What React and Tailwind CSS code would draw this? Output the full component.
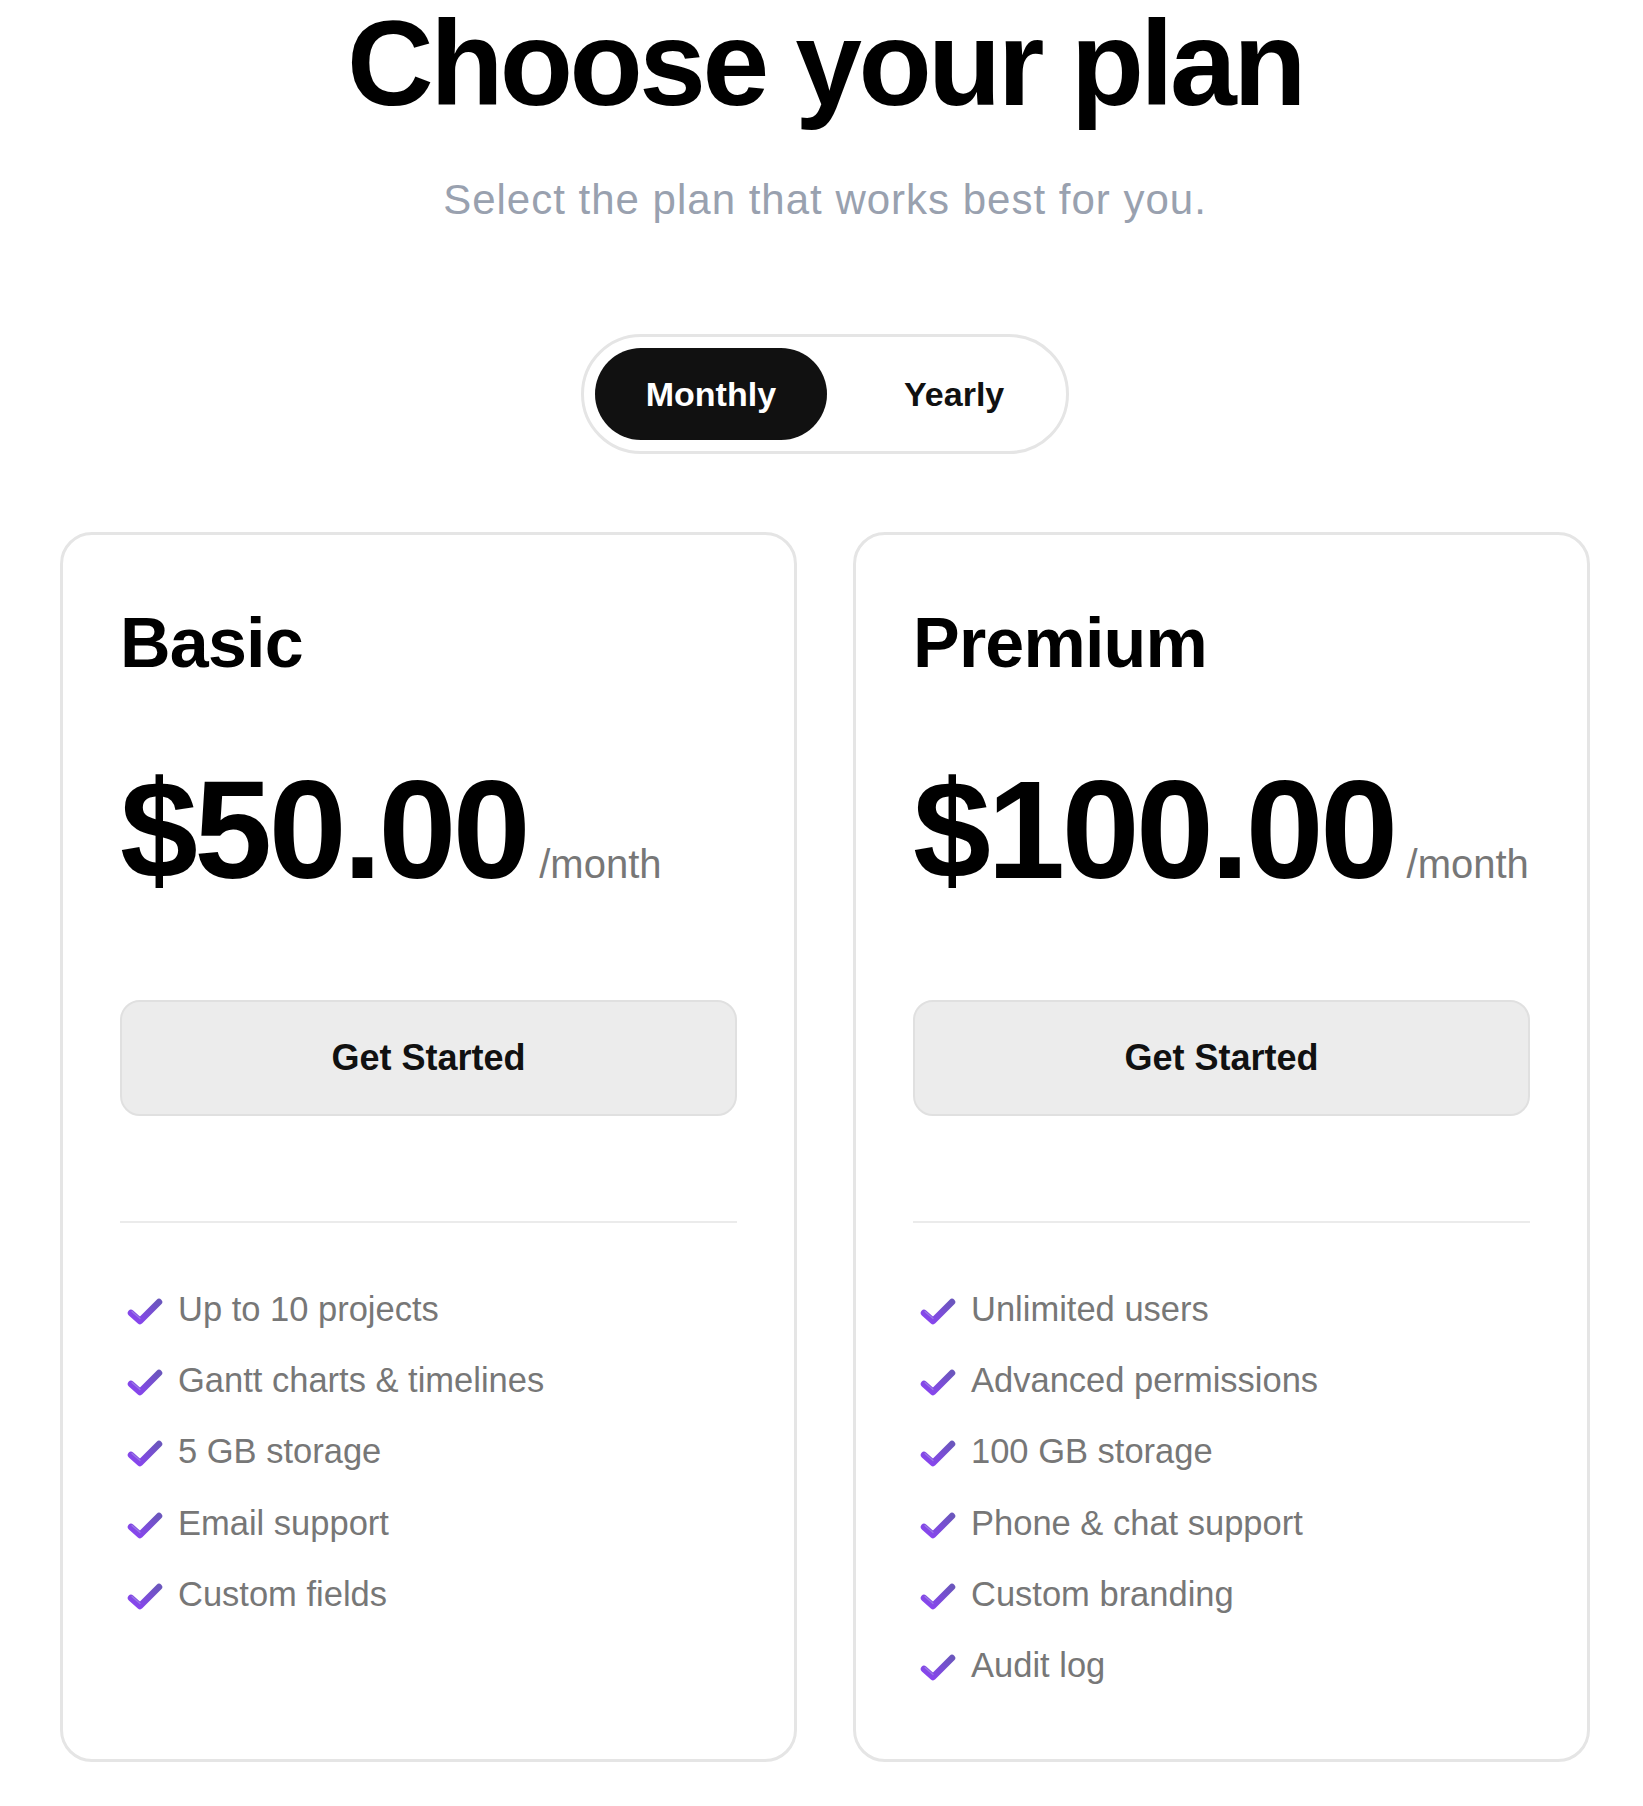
import React, { useState } from 'react';

const plans = [
  {
    name: 'Basic',
    price: '$50.00',
    features: ['Up to 10 projects', 'Gantt charts & timelines', '5 GB storage', 'Email support', 'Custom fields'],
  },
  {
    name: 'Premium',
    price: '$100.00',
    features: ['Unlimited users', 'Advanced permissions', '100 GB storage', 'Phone & chat support', 'Custom branding', 'Audit log'],
  },
];

const Check = () => (
  <svg width="36" height="28" viewBox="0 0 36 28" className="ml-[7px] mr-[15px] mt-[3px] shrink-0">
    <defs>
      <linearGradient id="chk" x1="0" y1="1" x2="1" y2="0">
        <stop offset="0" stopColor="#8a44f2" />
        <stop offset="1" stopColor="#6b56bd" />
      </linearGradient>
    </defs>
    <path d="M4 16 L13 24 L32 5" fill="none" stroke="url(#chk)" strokeWidth="6.5" strokeLinecap="round" strokeLinejoin="round" />
    <path d="M5 14.5 L13 21.5" fill="none" stroke="#a48de8" strokeWidth="1.2" strokeLinecap="round" opacity="0.7" />
  </svg>
);

function PlanCard({ plan }) {
  return (
    <div className="rounded-[32px] border-[3px] border-[#e5e5e5] pt-[73px] px-[57px] pb-[72px] flex flex-col">
      <h2 className="text-[70px] font-bold leading-none tracking-[-0.8px] text-black">{plan.name}</h2>
      <div className="mt-[82px] flex items-baseline">
        <span className="text-[140px] font-bold leading-none tracking-[-3.5px] text-black">{plan.price}</span>
        <span className="ml-[12px] text-[40px] text-[#777]">/month</span>
      </div>
      <button className="mt-[100px] h-[116px] w-full rounded-[20px] bg-[#ececec] border-2 border-[#e0e0e0] text-[36px] font-bold text-[#111]">
        Get Started
      </button>
      <div className="mt-[105px] h-[2px] bg-[#ebebeb]" />
      <ul className="mt-[64.5px] flex flex-col gap-[28.4px]">
        {plan.features.map((f) => (
          <li key={f} className="flex items-center h-[43px] text-[34.5px] leading-[43px] text-[#777]">
            <Check />
            <span>{f}</span>
          </li>
        ))}
      </ul>
    </div>
  );
}

export default function App() {
  const [cycle, setCycle] = useState('monthly');

  return (
    <div className="min-h-screen bg-white pb-10" style={{ fontFamily: '"Liberation Sans", Arial, sans-serif' }}>
      <div className="pl-[7px] pt-[3px] flex flex-col items-center">
        <h1 className="text-[120px] font-bold leading-none tracking-[-3.6px] text-black">Choose your plan</h1>
        <p className="mt-[56px] text-[42px] leading-none tracking-[1px] text-gray-400">Select the plan that works best for you.</p>

        {/* billing toggle */}
        <div className="mt-[113px] inline-flex items-center gap-[26px] p-[11px] rounded-full border-[3px] border-[#e5e5e5]">
          <button
            onClick={() => setCycle('monthly')}
            className={cycle === 'monthly'
              ? 'h-[92px] px-[51px] rounded-full text-[34px] font-bold bg-[#111] text-white'
              : 'h-[92px] px-[51px] rounded-full text-[34px] font-bold text-[#111]'}
          >
            Monthly
          </button>
          <button
            onClick={() => setCycle('yearly')}
            className={cycle === 'yearly'
              ? 'h-[92px] px-[51px] rounded-full text-[34px] font-bold bg-[#111] text-white'
              : 'h-[92px] px-[51px] rounded-full text-[34px] font-bold text-[#111]'}
          >
            Yearly
          </button>
        </div>
      </div>

      <div className="mt-[78px] pl-[60px] grid grid-cols-[737px_737px] gap-[56px]">
        {plans.map((p) => (
          <PlanCard key={p.name} plan={p} />
        ))}
      </div>
    </div>
  );
}
